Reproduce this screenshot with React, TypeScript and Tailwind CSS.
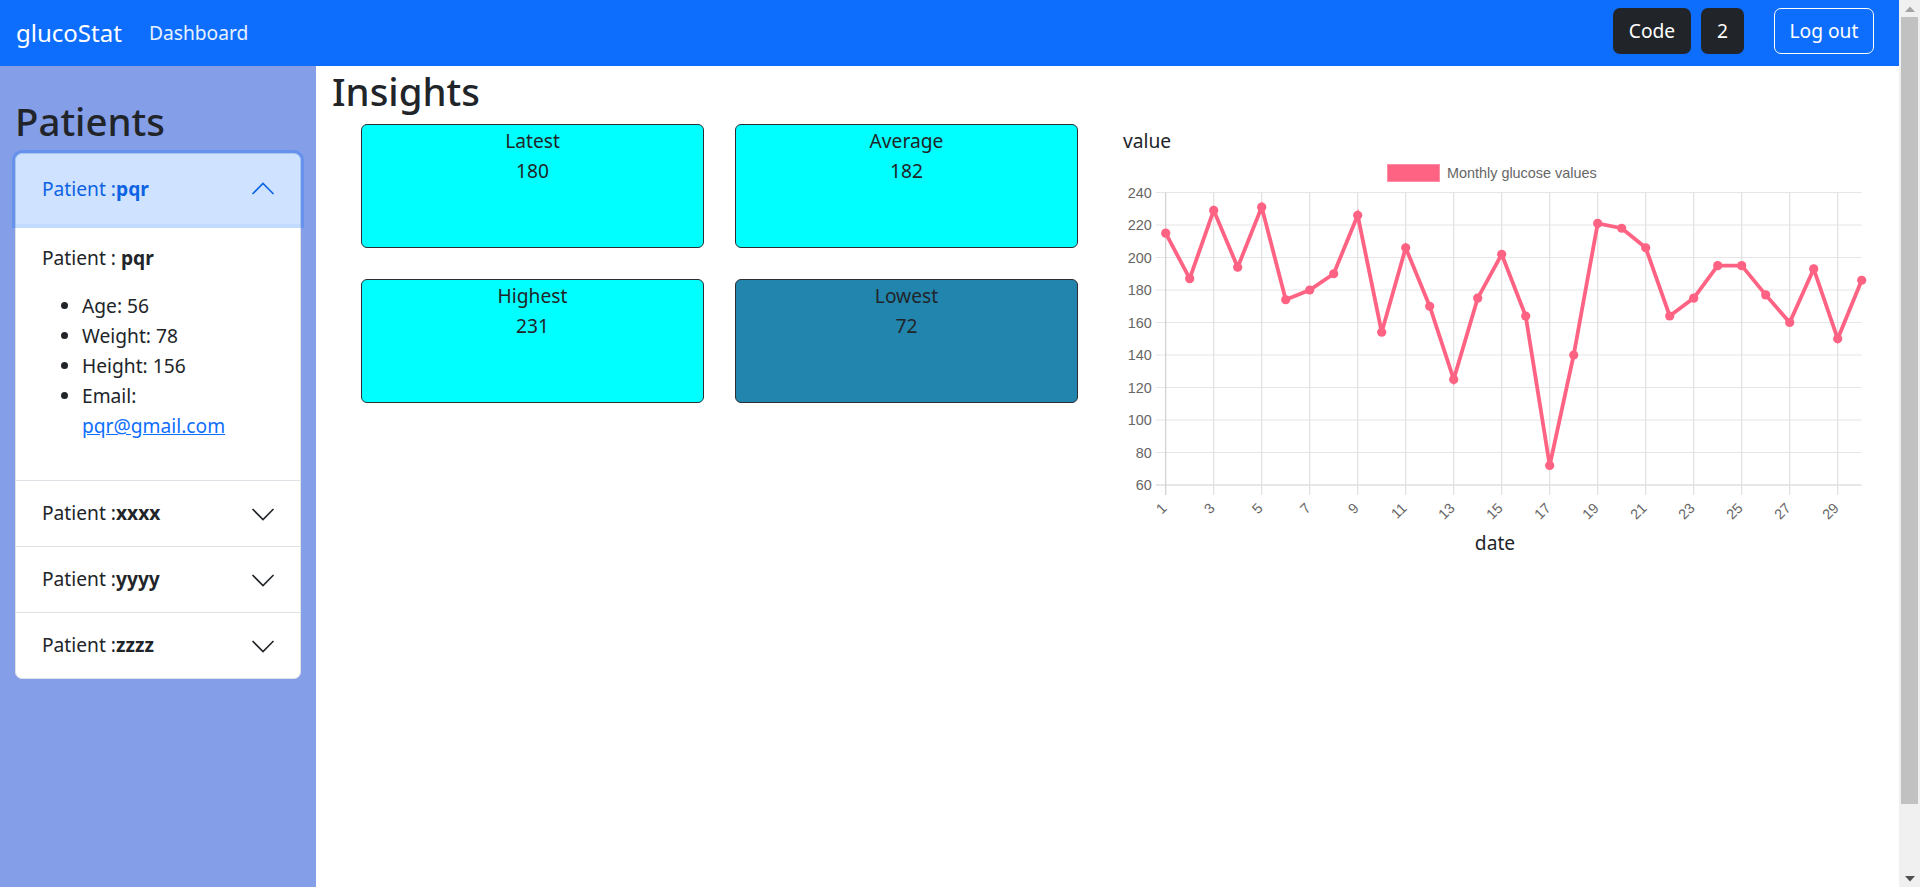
import React from "react";

const DATA = [215, 187, 229, 194, 231, 174, 180, 190, 226, 154, 206, 170, 125, 175, 202, 164, 72, 140, 221, 218, 206, 164, 175, 195, 195, 177, 160, 193, 150, 186];

const X0 = 55.7;
const DX = 24;
const xOf = (d: number) => X0 + (d - 1) * DX;
const yOf = (v: number) => 330 - (v - 60) * 1.625;

function Chevron({ up, color }: { up?: boolean; color: string }) {
  return (
    <svg width="24" height="24" viewBox="0 0 24 24" fill="none">
      <polyline
        points={up ? "1.5,17 12,6.5 22.5,17" : "1.5,7 12,17.5 22.5,7"}
        stroke={color}
        strokeWidth="1.6"
        strokeLinejoin="miter"
      />
    </svg>
  );
}

function Chart() {
  const yTicks = [60, 80, 100, 120, 140, 160, 180, 200, 220, 240];
  const xTicks = Array.from({ length: 15 }, (_, i) => i * 2 + 1);
  const pts = DATA.map((v, i) => `${xOf(i + 1)},${yOf(v)}`).join(" ");
  return (
    <svg width="770" height="373" viewBox="0 0 770 373" className="block">
      <rect x="277.5" y="9.5" width="52" height="17" fill="#ff6384" stroke="#ff8fa6" strokeWidth="1" />
      <text x="337" y="18" dy="0.35em" fontSize="14.4" fill="#666" fontFamily="'Liberation Sans', Arial, sans-serif">
        Monthly glucose values
      </text>
      {yTicks.map((t) => (
        <g key={t}>
          <line x1="45.7" x2="751.7" y1={yOf(t)} y2={yOf(t)} stroke={t === 60 ? "#cfcfcf" : "#e6e6e6"} strokeWidth="1.2" />
          <text x="41.7" y={yOf(t)} dy="0.35em" textAnchor="end" fontSize="14.4" fill="#666" fontFamily="'Liberation Sans', Arial, sans-serif">
            {t}
          </text>
        </g>
      ))}
      {xTicks.map((d) => (
        <g key={d}>
          <line x1={xOf(d)} x2={xOf(d)} y1={yOf(240)} y2={340} stroke={d === 1 ? "#cfcfcf" : "#e0e0e0"} strokeWidth="1.2" />
          <text
            x={xOf(d) + 2}
            y={354}
            textAnchor="end"
            fontSize="14.4"
            fill="#666"
            fontFamily="'Liberation Sans', Arial, sans-serif"
            transform={`rotate(-45 ${xOf(d) + 2} 354)`}
          >
            {d}
          </text>
        </g>
      ))}
      <polyline points={pts} fill="none" stroke="#ff6384" strokeWidth="3.8" strokeLinejoin="miter" />
      {DATA.map((v, i) => (
        <circle key={i} cx={xOf(i + 1)} cy={yOf(v)} r="4.6" fill="#ff6384" />
      ))}
    </svg>
  );
}

function Card({ title, value, dark }: { title: string; value: string; dark?: boolean }) {
  return (
    <div
      className={`w-[343px] h-[124px] rounded-[6px] border border-[#2b2f33] pt-[1px] text-center text-[19.2px] leading-[29.5px] text-[#212529] ${
        dark ? "bg-[#2185ae]" : "bg-[#00ffff]"
      }`}
    >
      <div>{title}</div>
      <div>{value}</div>
    </div>
  );
}

function CollapsedItem({ name }: { name: string }) {
  return (
    <div className="border-t border-[#dee2e6]">
      <div className="h-[65px] flex items-center justify-between pl-[26px] pr-[25px] text-[19.2px] text-[#212529]">
        <span>
          Patient :<b className="font-bold">{name}</b>
        </span>
        <Chevron color="#212529" />
      </div>
    </div>
  );
}

function Scrollbar() {
  return (
    <div className="w-[21px] h-screen shrink-0 bg-[#f0f0f0] flex flex-col items-center">
      <div className="h-[17px] flex items-center justify-center">
        <svg width="10" height="6" viewBox="0 0 10 6">
          <polygon points="0,6 5,0.5 10,6" fill="#a3a3a3" />
        </svg>
      </div>
      <div className="w-[17px] h-[787px] bg-[#c1c1c1]" />
      <div className="flex-1" />
      <div className="h-[17px] flex items-center justify-center">
        <svg width="10" height="6" viewBox="0 0 10 6">
          <polygon points="0,0 5,5.5 10,0" fill="#505050" />
        </svg>
      </div>
    </div>
  );
}

export default function App() {
  return (
    <div className="h-screen flex overflow-hidden bg-white text-[#212529] font-['Noto_Sans',sans-serif]">
      <div className="flex-1 min-w-0 h-screen overflow-hidden">
        <nav className="h-[66px] bg-[#0d6efd] flex items-center pl-4 pr-[25px]">
          <span className="w-[133px] text-[24px] text-white leading-none">glucoStat</span>
          <span className="text-[19.2px] text-white/90 leading-none">Dashboard</span>
          <div className="ml-auto mb-[4px] flex items-center">
            <button className="w-[78px] h-[46px] rounded-[7px] bg-[#212529] text-white text-[19.2px]">Code</button>
            <button className="ml-[10px] w-[43px] h-[46px] rounded-[7px] bg-[#212529] text-white text-[19.2px]">2</button>
            <button className="ml-[30px] w-[100px] h-[46px] rounded-[7px] border border-white text-white text-[19.2px]">
              Log out
            </button>
          </div>
        </nav>
        <div className="flex">
          <aside className="w-[316px] shrink-0 min-h-screen bg-[#859ee8] pt-[32px] px-[15px]">
            <h2 className="text-[38.4px] leading-[46px] font-medium text-[#212529]">Patients</h2>
            <div className="mt-[9px] w-[286px] bg-white rounded-[7px] border border-[#dee2e6]">
              <div>
                <div className="relative z-10 h-[70px] flex items-center justify-between pl-[26px] pr-[25px] bg-[#cfe2ff] rounded-t-[6px] shadow-[0_0_0_4px_rgba(13,110,253,0.25)] text-[19.2px] text-[#0c63e4]">
                  <span>
                    Patient :<b className="font-bold">pqr</b>
                  </span>
                  <Chevron up color="#0c63e4" />
                </div>
                <div className="pt-[19px] pb-[39px] pl-[26px] pr-[26px] text-[19.2px] leading-[30px]">
                  <p className="mb-[18px]">
                    Patient : <b className="font-bold">pqr</b>
                  </p>
                  <ul className="list-disc pl-[40px]">
                    <li>Age: 56</li>
                    <li>Weight: 78</li>
                    <li>Height: 156</li>
                    <li>
                      Email: <a className="text-[#0d6efd] underline">pqr@gmail.com</a>
                    </li>
                  </ul>
                </div>
              </div>
              <CollapsedItem name="xxxx" />
              <CollapsedItem name="yyyy" />
              <CollapsedItem name="zzzz" />
            </div>
          </aside>
          <main className="flex-1 pl-4">
            <h1 className="pt-[2px] text-[38.4px] leading-[46px] font-medium text-[#212529]">Insights</h1>
            <div className="flex items-start">
              <div className="ml-[29px] mt-[10px] grid grid-cols-[343px_343px] gap-[31px]">
                <Card title="Latest" value="180" />
                <Card title="Average" value="182" />
                <Card title="Highest" value="231" />
                <Card title="Lowest" value="72" dark />
              </div>
              <div className="ml-[32px] mt-[12px] w-[770px]">
                <div className="pl-[13px] text-[19.2px] leading-[29px]">value</div>
                <Chart />
                <div className="text-center text-[19.2px] leading-[29px]">date</div>
              </div>
            </div>
          </main>
        </div>
      </div>
      <Scrollbar />
    </div>
  );
}
